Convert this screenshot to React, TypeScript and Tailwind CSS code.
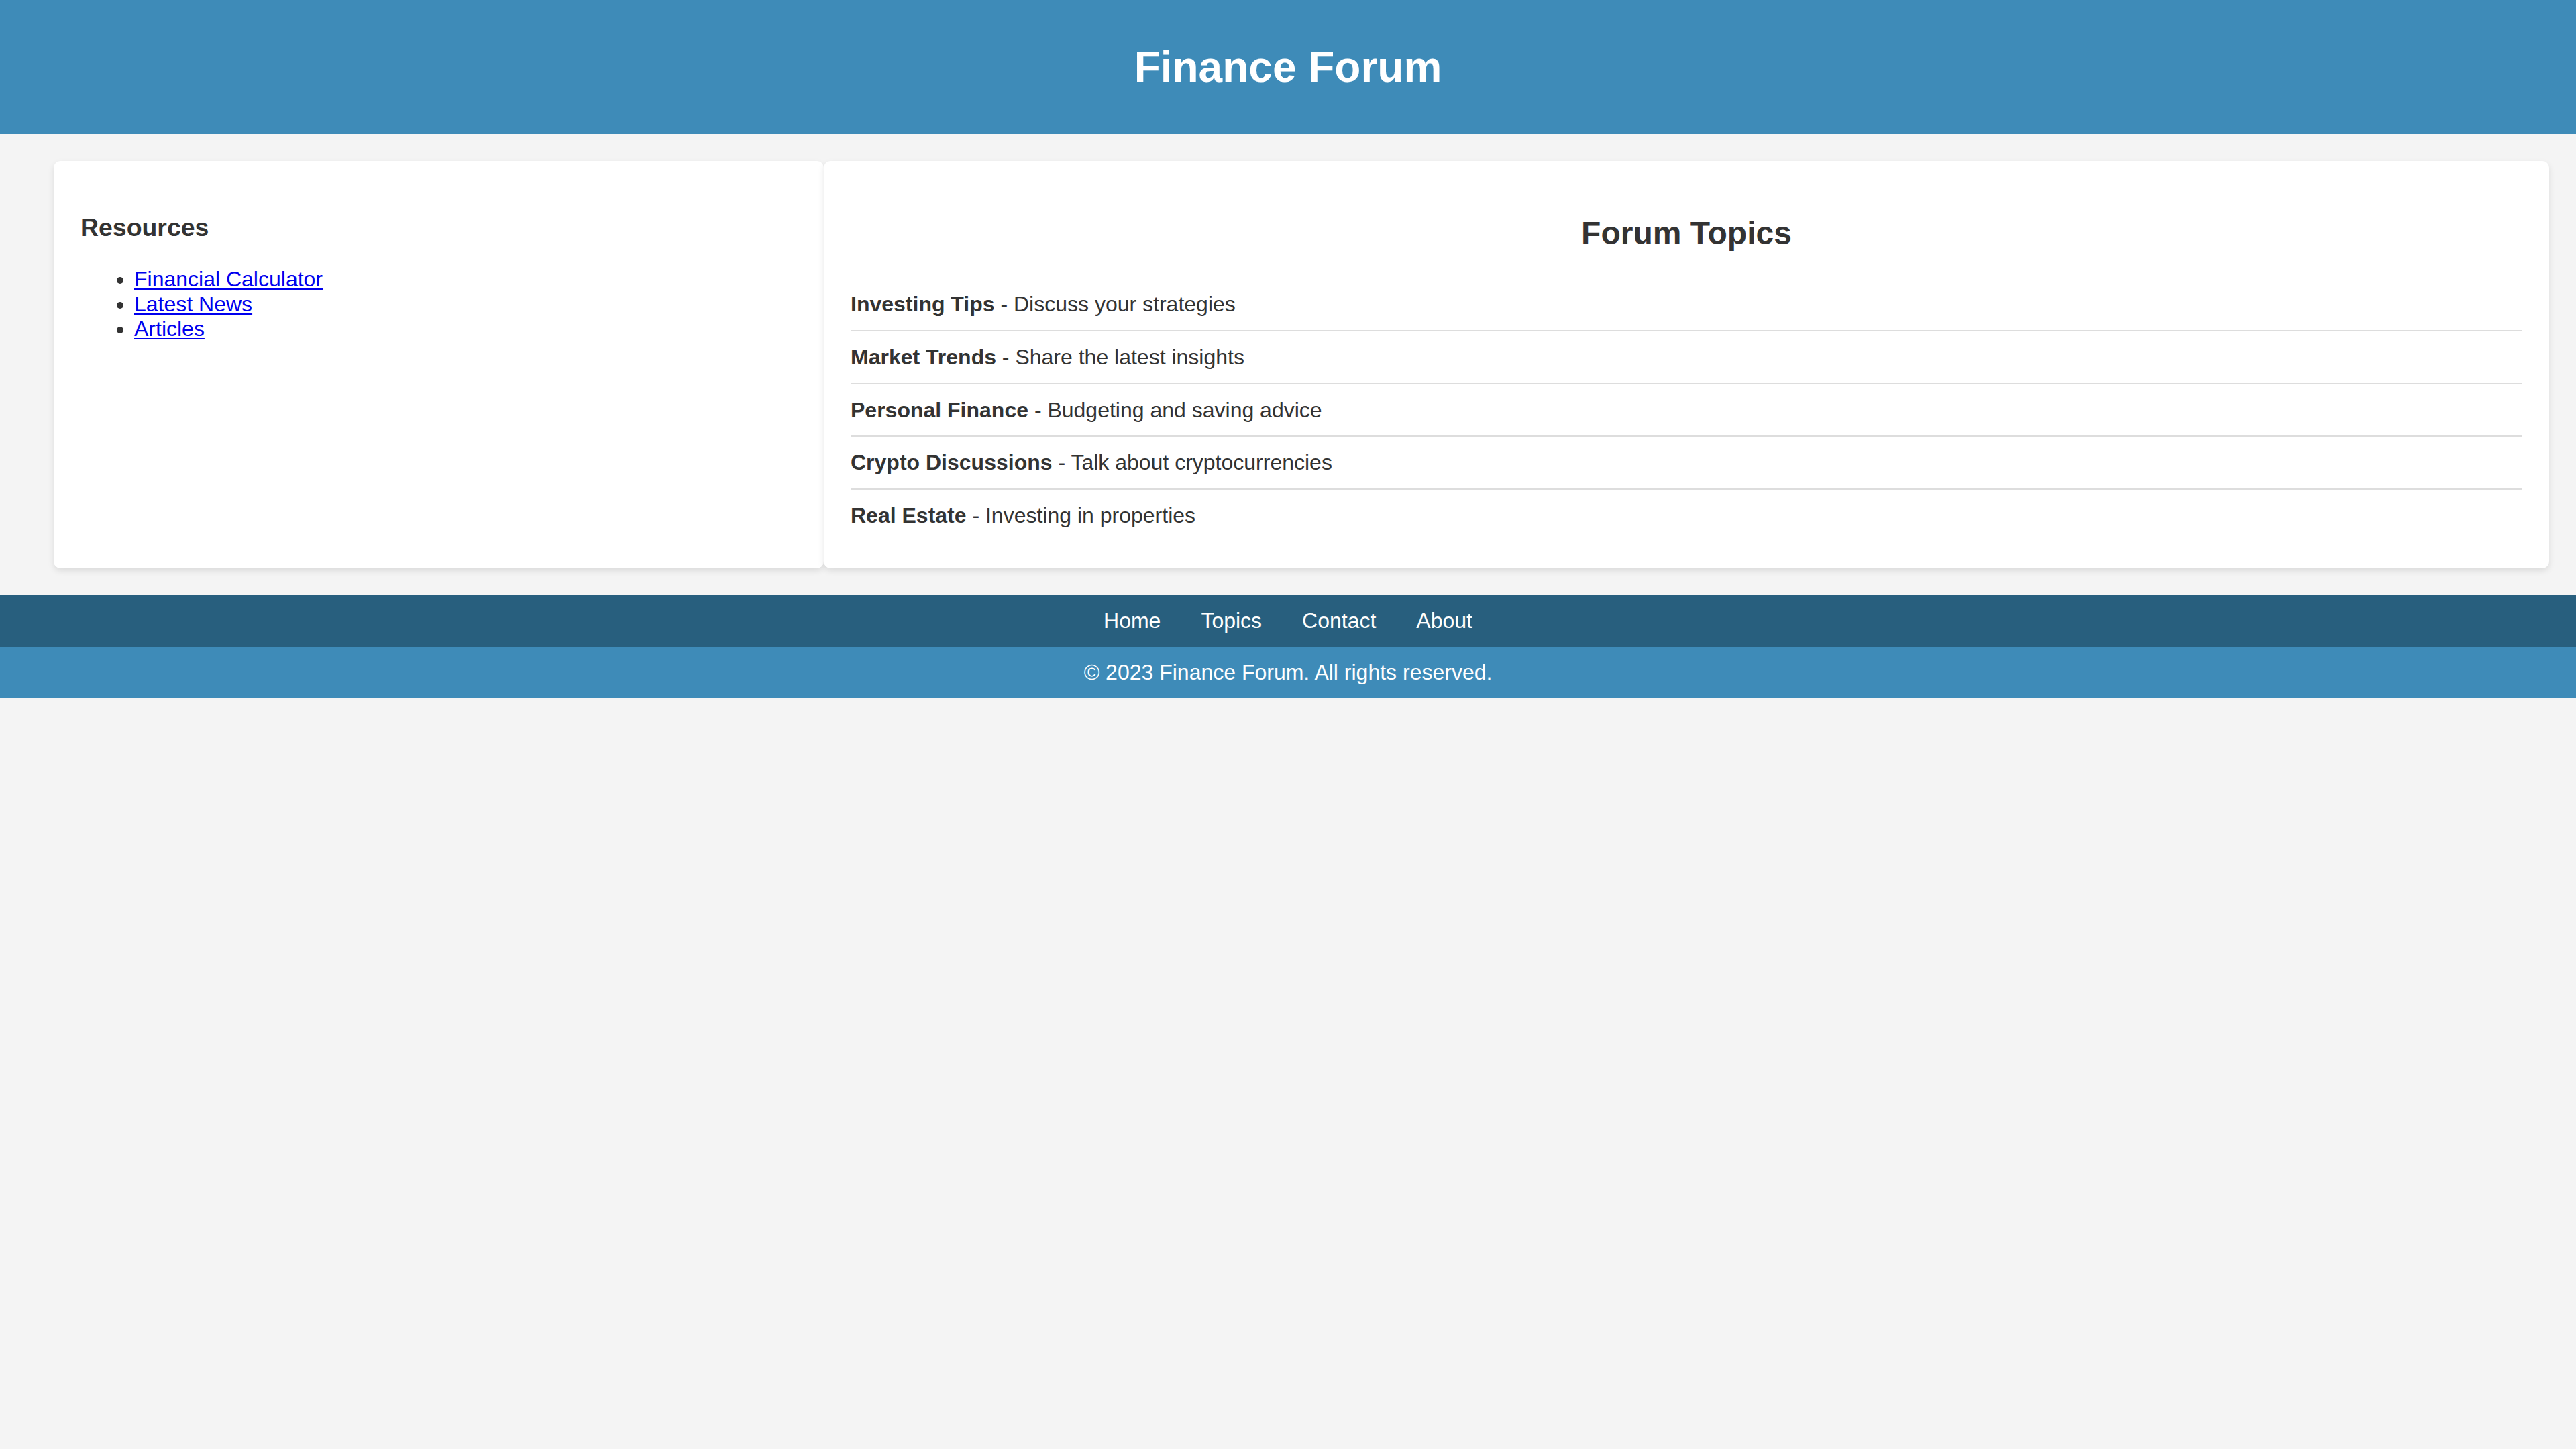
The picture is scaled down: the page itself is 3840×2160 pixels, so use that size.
const resources = ['Financial Calculator', 'Latest News', 'Articles']

const topics = [
  { title: 'Investing Tips', desc: 'Discuss your strategies' },
  { title: 'Market Trends', desc: 'Share the latest insights' },
  { title: 'Personal Finance', desc: 'Budgeting and saving advice' },
  { title: 'Crypto Discussions', desc: 'Talk about cryptocurrencies' },
  { title: 'Real Estate', desc: 'Investing in properties' },
]

const navLinks = ['Home', 'Topics', 'Contact', 'About']

export default function App() {
  return (
    <div className="min-h-screen bg-[#f4f4f4] font-['Liberation_Sans',Arial,sans-serif] text-[32px] leading-[36.8px] text-[#333]">
      <header className="bg-[#3e8bb8] py-[20px] text-center text-white">
        <h1 className="my-[42.88px] text-[64px] font-bold leading-[74.4px]">Finance Forum</h1>
      </header>

      <div className="flex items-stretch pt-[40px] pr-[40px] pb-[40px] pl-[80px]">
        <aside className="w-[1148px] shrink-0 rounded-[10px] bg-white p-[40px] shadow-[0_4px_10px_rgba(0,0,0,0.1)]">
          <h3 className="my-[37.44px] text-[37.44px] font-bold leading-[43px]">Resources</h3>
          <ul className="list-disc pl-[80px]">
            {resources.map(r => (
              <li key={r}>
                <a href="#" className="text-[#0000ee] underline decoration-[2px] underline-offset-[3px]">{r}</a>
              </li>
            ))}
          </ul>
        </aside>

        <main className="flex-1 rounded-[10px] bg-white p-[40px] shadow-[0_4px_10px_rgba(0,0,0,0.1)]">
          <h2 className="my-[39.84px] text-center text-[48px] font-bold leading-[55.2px]">Forum Topics</h2>
          <ul>
            {topics.map(t => (
              <li key={t.title} className="border-b-2 border-[#ddd] py-[20px] last:border-b-0">
                <strong className="font-bold">{t.title}</strong> - {t.desc}
              </li>
            ))}
          </ul>
        </main>
      </div>

      <nav className="flex justify-center gap-[60px] bg-[#285f7e] py-[20px] text-white">
        {navLinks.map(l => (
          <a key={l} href="#" className="text-white no-underline">{l}</a>
        ))}
      </nav>

      <footer className="bg-[#3e8bb8] py-[20px] text-center text-white">
        <p>© 2023 Finance Forum. All rights reserved.</p>
      </footer>
    </div>
  )
}
